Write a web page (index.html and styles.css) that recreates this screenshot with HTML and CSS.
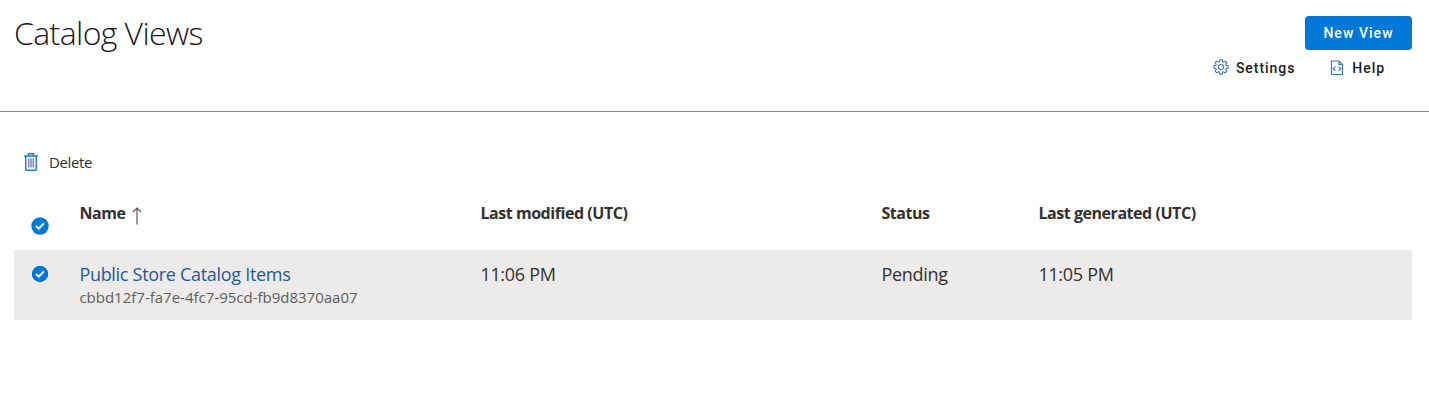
FILE: index.html
```html
<!DOCTYPE html>
<html lang="en">
<head>
<meta charset="utf-8">
<title>Catalog Views</title>
<link rel="stylesheet" href="styles.css">
</head>
<body>
<header class="page-header">
  <h1 class="title">Catalog Views</h1>
  <div class="actions">
    <button class="primary">New View</button>
    <nav class="links">
      <a class="link settings"><svg class="gear" width="16" height="16" viewBox="0 0 16 16" fill="none" stroke="#3b73c0" stroke-width="1.100"><path d="M6.900.8h2.200l.4 1.900 1 .4 1.700-1 1.600 1.600-1 1.700.4 1 1.900.4v2.300l-1.900.4-.4 1 1 1.700-1.600 1.600-1.700-1-1 .4-.4 1.900H6.900l-.4-1.900-1-.4-1.700 1-1.600-1.600 1-1.700-.4-1L.9 9.100V6.800l1.900-.4.400-1-1-1.700 1.600-1.600 1.700 1 1-.4z"/><circle cx="8" cy="8" r="2.500"/></svg><span>Settings</span></a>
      <a class="link help"><svg class="doc" width="14" height="16" viewBox="0 0 14 16" fill="none" stroke="#3b73c0" stroke-width="1.200"><path d="M1.500 1h7.500l3.500 3.500V14.500h-11zM9 1v3.500h3.500M5.300 6.700L3.300 8.700l2 2M8.700 6.700l2 2-2 2"/></svg><span>Help</span></a>
    </nav>
  </div>
</header>
<main class="content">
  <div class="toolbar"><svg class="trash" width="16" height="20" viewBox="0 0 16 20" fill="none" stroke="#1c80d3" stroke-width="1.500"><path d="M1 4h14M5.500 4V1.700h5V4M2.700 4v13.200q0 1 1 1h8.600q1 0 1-1V4"/><path stroke="#7c7fc2" d="M5.700 6.500v9M8 6.500v9M10.300 6.500v9"/></svg><span>Delete</span></div>
  <div class="row head">
    <svg class="check" width="18" height="18" viewBox="0 0 18 18"><circle cx="9" cy="9" r="8.700" fill="#0078d7"/><path d="M5 9.100l2.800 2.600L13 6.300" fill="none" stroke="#fff" stroke-width="2"/></svg>
    <div class="cell name">Name<svg class="arrow" width="10" height="18" viewBox="0 0 10 18" fill="none" stroke="#66594f" stroke-width="1.200"><path d="M5 17.500V1M1 5l4-4 4 4"/></svg></div>
    <div class="cell">Last modified (UTC)</div>
    <div class="cell">Status</div>
    <div class="cell generated">Last generated (UTC)</div>
  </div>
  <div class="row item">
    <svg class="check" width="18" height="18" viewBox="0 0 18 18"><circle cx="9" cy="9" r="9" fill="#fff"/><circle cx="9" cy="9" r="8.300" fill="#0078d7"/><path d="M5 9.100l2.800 2.600L13 6.300" fill="none" stroke="#fff" stroke-width="2"/></svg>
    <div class="cell"><a class="view-name">Public Store Catalog Items</a><div class="view-id">cbbd12f7-fa7e-4fc7-95cd-fb9d8370aa07</div></div>
    <div class="cell">11:06 PM</div>
    <div class="cell">Pending</div>
    <div class="cell">11:05 PM</div>
  </div>
</main>
</body>
</html>
```
FILE: styles.css
```css
* { box-sizing: border-box; }
body { margin: 0; background: #fff; color: #323130; font-family: "Open Sans", sans-serif; }
.page-header { display: flex; justify-content: space-between; height: 112px; padding: 16px 17px 0 14px; border-bottom: 1px solid #8a8a8a; }
.title { margin: 0; font: 300 32px/34px "Open Sans", sans-serif; letter-spacing: -0.6px; color: #171717; }
.actions { display: flex; flex-direction: column; align-items: flex-end; }
.primary { width: 107px; height: 34px; padding: 0; border: 0; border-radius: 4px; background: #0078d7; color: #fff; font: 500 14px/34px Roboto, sans-serif; letter-spacing: 1.05px; }
.links { display: flex; gap: 35px; margin: 8px 27px 0 0; }
.link { display: flex; align-items: center; height: 20px; color: #1b1b1b; font: 500 14px/20px Roboto, sans-serif; letter-spacing: 0.95px; }
.gear { margin: -2px 7px 0 0; }
.doc { margin: -1px 8px 0 0; }
.content { padding: 40px 17px 0 14px; }
.toolbar { display: flex; align-items: center; gap: 10px; height: 20px; padding-left: 9px; font-size: 15px; line-height: 20px; letter-spacing: -0.35px; }
.row { display: grid; grid-template-columns: 65.4px 401px 401px 157px 1fr; }
.check { margin-left: 17.4px; }
.head { height: 78px; padding-top: 31px; font-weight: 700; font-size: 16px; line-height: 20px; letter-spacing: -0.45px; }
.head .check { margin-top: 14px; }
.name { display: flex; }
.arrow { margin: 4px 0 0 7px; }
.item { height: 70px; padding-top: 12px; background: #edebe9; font-size: 18px; line-height: 24px; letter-spacing: -0.3px; }
.item .check { margin-top: 2.5px; }
.view-name { display: block; color: #23589f; }
.view-id { color: #605e5c; font-size: 15px; line-height: 22px; letter-spacing: 0; }
```
